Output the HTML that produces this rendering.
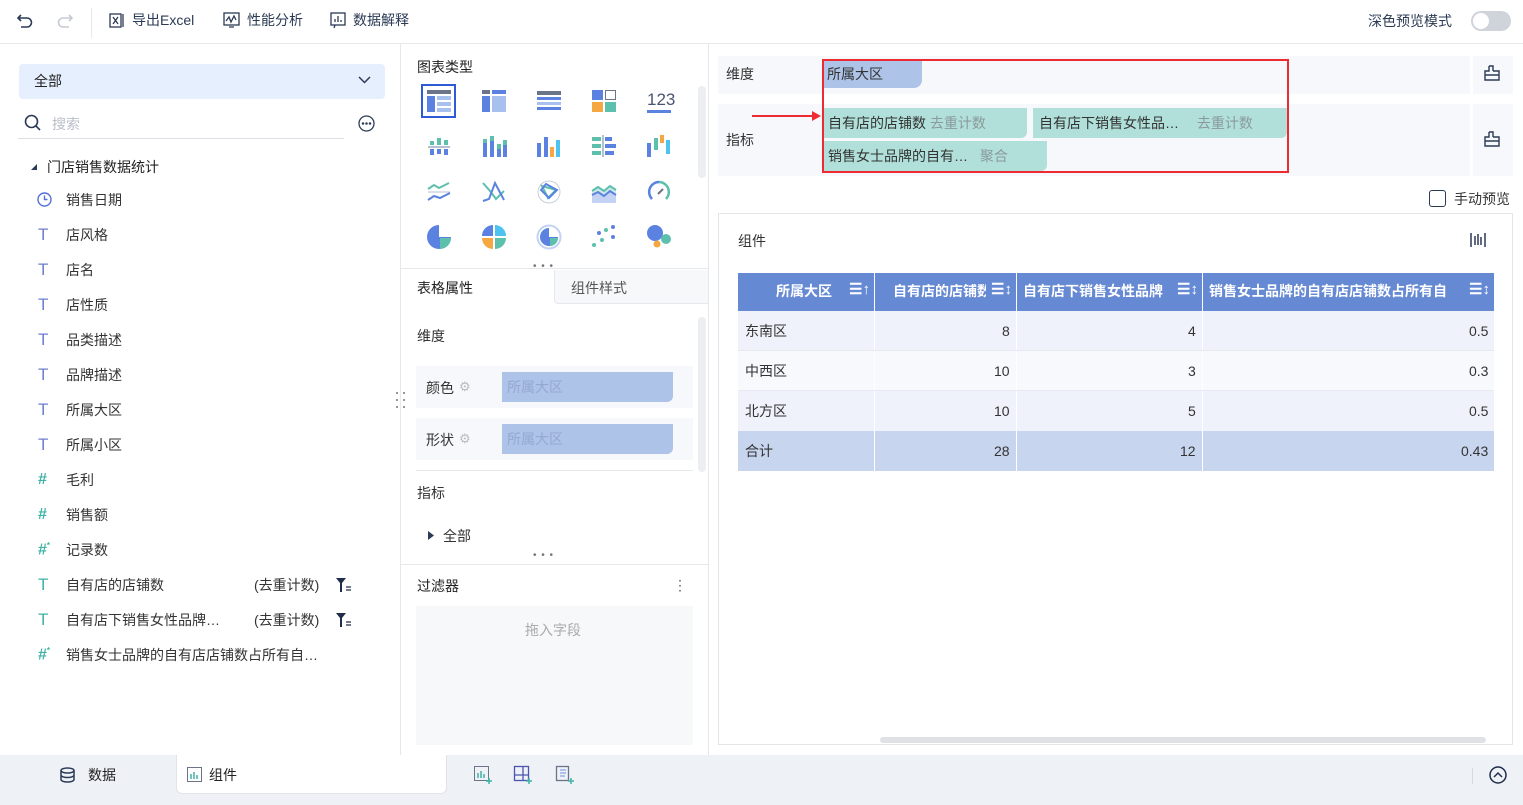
<!DOCTYPE html>
<html><head><meta charset="utf-8"><style>
*{box-sizing:border-box;margin:0;padding:0}
body{width:1523px;height:805px;overflow:hidden;background:#fff;font-family:"Liberation Sans","Noto Sans CJK SC",sans-serif;font-size:14px;color:#333;position:relative}
.a{position:absolute}
.t{position:absolute;white-space:nowrap;line-height:1}
svg{position:absolute;overflow:visible}
.d{position:absolute;width:2px;height:2px;background:#777;border-radius:1px}
</style></head><body>
<!-- top bar -->
<div class="a" style="left:0;top:43px;width:1523px;height:1px;background:#e6e8ec"></div>
<svg style="left:16px;top:12px" width="18" height="18" viewBox="0 0 18 18" fill="none" stroke="#2b3a55" stroke-width="1.6"><path d="M5 3L2 6l3 3M2 6h9a4.5 4.5 0 010 9H5"/></svg>
<svg style="left:56px;top:12px" width="18" height="18" viewBox="0 0 18 18" fill="none" stroke="#c5cad3" stroke-width="1.6"><path d="M13 3l3 3-3 3M16 6H7a4.5 4.5 0 000 9h6"/></svg>
<div class="a" style="left:91px;top:8px;width:1px;height:30px;background:#e6e8ec"></div>
<svg style="left:109px;top:13px" width="16" height="16" viewBox="0 0 16 16" fill="none" stroke="#2b3a55" stroke-width="1.3"><rect x="1" y="1" width="11" height="13"/><path d="M4 4l5 7M9 4l-5 7M14 1v13"/></svg>
<div class="t" style="left:132px;top:13px;font-size:14px;color:#2b3a55">导出Excel</div>
<svg style="left:223px;top:12px" width="17" height="16" viewBox="0 0 17 16" fill="none" stroke="#2b3a55" stroke-width="1.3"><rect x="1" y="1" width="15" height="12"/><path d="M3 9l3-4 2 5 3-6 2 4M6 15h5"/></svg>
<div class="t" style="left:247px;top:13px;color:#2b3a55">性能分析</div>
<svg style="left:330px;top:12px" width="16" height="17" viewBox="0 0 16 17" fill="none" stroke="#2b3a55" stroke-width="1.3"><rect x="1" y="1" width="14" height="12"/><path d="M5 10V7M8 10V4M11 10V8M5 13l-1 3"/></svg>
<div class="t" style="left:353px;top:13px;color:#2b3a55">数据解释</div>
<div class="t" style="left:1368px;top:14px;color:#2b3a55">深色预览模式</div>
<div class="a" style="left:1471px;top:11px;width:40px;height:20px;border-radius:10px;background:#cfd3da"></div>
<div class="a" style="left:1473px;top:13px;width:16px;height:16px;border-radius:8px;background:#fff"></div>

<!-- left panel -->
<div class="a" style="left:400px;top:44px;width:1px;height:711px;background:#e6e8ec"></div>
<div class="a" style="left:19px;top:64px;width:366px;height:35px;border-radius:4px;background:#e6effd"></div>
<div class="t" style="left:34px;top:74px;color:#222">全部</div>
<svg style="left:358px;top:76px" width="13" height="8" viewBox="0 0 13 8" fill="none" stroke="#2b3a55" stroke-width="1.5"><path d="M1 1l5.5 5.5L12 1"/></svg>
<svg style="left:24px;top:114px" width="18" height="18" viewBox="0 0 18 18" fill="none" stroke="#2b3a55" stroke-width="1.6"><circle cx="7.5" cy="7.5" r="6"/><path d="M12 12l4 4"/></svg>
<div class="t" style="left:52px;top:117px;color:#b9bec8">搜索</div>
<div class="a" style="left:18px;top:138px;width:326px;height:1px;background:#dcdfe4"></div>
<svg style="left:358px;top:115px" width="17" height="17" viewBox="0 0 17 17" fill="none" stroke="#2b3a55" stroke-width="1.3"><circle cx="8.5" cy="8.5" r="7.5"/><circle cx="5" cy="8.5" r=".6" fill="#2b3a55"/><circle cx="8.5" cy="8.5" r=".6" fill="#2b3a55"/><circle cx="12" cy="8.5" r=".6" fill="#2b3a55"/></svg>
<svg style="left:31px;top:164px" width="7" height="7" viewBox="0 0 7 7"><path d="M6 0v6H0z" fill="#2b3a55"/></svg>
<div class="t" style="left:47px;top:160px;color:#222">门店销售数据统计</div>

<svg style="left:37px;top:192px" width="15" height="15" viewBox="0 0 15 15" fill="none" stroke="#5570d8" stroke-width="1.4"><circle cx="7.5" cy="7.5" r="6.5"/><path d="M7.5 3.5v4h3"/></svg>
<div class="t" style="left:66px;top:193px">销售日期</div>
<div class="t" style="left:38px;top:226px;font-size:17px;color:#6f7fcf">T</div><div class="t" style="left:66px;top:228px">店风格</div>
<div class="t" style="left:38px;top:261px;font-size:17px;color:#6f7fcf">T</div><div class="t" style="left:66px;top:263px">店名</div>
<div class="t" style="left:38px;top:296px;font-size:17px;color:#6f7fcf">T</div><div class="t" style="left:66px;top:298px">店性质</div>
<div class="t" style="left:38px;top:331px;font-size:17px;color:#6f7fcf">T</div><div class="t" style="left:66px;top:333px">品类描述</div>
<div class="t" style="left:38px;top:366px;font-size:17px;color:#6f7fcf">T</div><div class="t" style="left:66px;top:368px">品牌描述</div>
<div class="t" style="left:38px;top:401px;font-size:17px;color:#6f7fcf">T</div><div class="t" style="left:66px;top:403px">所属大区</div>
<div class="t" style="left:38px;top:436px;font-size:17px;color:#6f7fcf">T</div><div class="t" style="left:66px;top:438px">所属小区</div>
<div class="t" style="left:38px;top:472px;font-size:16px;color:#3fb3a6;font-weight:bold">#</div><div class="t" style="left:66px;top:473px">毛利</div>
<div class="t" style="left:38px;top:507px;font-size:16px;color:#3fb3a6;font-weight:bold">#</div><div class="t" style="left:66px;top:508px">销售额</div>
<div class="t" style="left:38px;top:542px;font-size:16px;color:#3fb3a6;font-weight:bold">#<sup style="font-size:8px">*</sup></div><div class="t" style="left:66px;top:543px">记录数</div>
<div class="t" style="left:38px;top:576px;font-size:17px;color:#3fb3a6">T</div><div class="t" style="left:66px;top:578px">自有店的店铺数</div>
<div class="t" style="left:254px;top:578px">(去重计数)</div>
<svg style="left:336px;top:578px" width="16" height="14" viewBox="0 0 16 14"><path d="M0 0h10L6 5v9H4V5z" fill="#1f2d4a"/><path d="M10 9h5M10 12h5" stroke="#1f2d4a" stroke-width="1.3"/></svg>
<div class="t" style="left:38px;top:611px;font-size:17px;color:#3fb3a6">T</div><div class="t" style="left:66px;top:613px">自有店下销售女性品牌…</div>
<div class="t" style="left:254px;top:613px">(去重计数)</div>
<svg style="left:336px;top:613px" width="16" height="14" viewBox="0 0 16 14"><path d="M0 0h10L6 5v9H4V5z" fill="#1f2d4a"/><path d="M10 9h5M10 12h5" stroke="#1f2d4a" stroke-width="1.3"/></svg>
<div class="t" style="left:38px;top:647px;font-size:16px;color:#3fb3a6;font-weight:bold">#<sup style="font-size:8px">*</sup></div><div class="t" style="left:66px;top:648px">销售女士品牌的自有店店铺数占所有自…</div>
<div class="d" style="left:396px;top:392px"></div><div class="d" style="left:403px;top:392px"></div>
<div class="d" style="left:396px;top:399px"></div><div class="d" style="left:403px;top:399px"></div>
<div class="d" style="left:396px;top:406px"></div><div class="d" style="left:403px;top:406px"></div>

<!-- middle panel -->
<div class="a" style="left:708px;top:44px;width:1px;height:711px;background:#e6e8ec"></div>
<div class="t" style="left:417px;top:60px;color:#222">图表类型</div>
<div class="a" style="left:698px;top:86px;width:8px;height:92px;border-radius:4px;background:#eceef1"></div>
<div class="a" style="left:421px;top:84px;width:35px;height:34px;border:2px solid #2f5bd6"></div>
<svg style="left:427px;top:90px" width="24" height="22" viewBox="0 0 24 22"><rect width="24" height="4" fill="#6b7488"/><rect y="6" width="8" height="16" fill="#5b82e0"/><rect x="10" y="6" width="14" height="4" fill="#a8c0ee"/><rect x="10" y="12" width="14" height="4" fill="#a8c0ee"/><rect x="10" y="18" width="14" height="4" fill="#a8c0ee"/></svg>
<svg style="left:482px;top:90px" width="24" height="22" viewBox="0 0 24 22"><rect width="8" height="4" fill="#6b7488"/><rect x="10" width="14" height="4" fill="#5b82e0"/><rect y="6" width="8" height="16" fill="#5b82e0"/><rect x="10" y="6" width="14" height="16" fill="#a8c0ee"/></svg>
<svg style="left:537px;top:91px" width="24" height="20" viewBox="0 0 24 20"><rect width="24" height="4" fill="#6b7488"/><rect y="6" width="24" height="3" fill="#5b82e0"/><rect y="11" width="24" height="3" fill="#a8c0ee"/><rect y="16" width="24" height="3" fill="#5b82e0"/></svg>
<svg style="left:592px;top:90px" width="24" height="22" viewBox="0 0 24 22"><rect width="11" height="10" fill="#5b82e0"/><rect x="13.5" y="0.5" width="10" height="9" fill="#fff" stroke="#6b7488"/><rect y="12" width="11" height="10" fill="#f5a742"/><rect x="13" y="12" width="11" height="10" fill="#5cc0ad"/></svg>
<div class="t" style="left:647px;top:91px;font-size:17px;color:#4a5570">123</div>
<div class="a" style="left:647px;top:110px;width:24px;height:3px;background:#5b82e0"></div>
<svg style="left:428px;top:135px" width="22" height="22" viewBox="0 0 22 22"><rect x="2" y="6" width="4" height="4" fill="#5cc0ad"/><rect x="9" y="3" width="4" height="7" fill="#5cc0ad"/><rect x="16" y="5" width="4" height="5" fill="#5cc0ad"/><rect y="11" width="22" height="2" fill="#b7c0d0"/><rect x="2" y="14" width="4" height="6" fill="#5b82e0"/><rect x="9" y="14" width="4" height="5" fill="#5b82e0"/><rect x="16" y="14" width="4" height="6" fill="#5b82e0"/></svg>
<svg style="left:483px;top:135px" width="24" height="22" viewBox="0 0 24 22"><rect x="0" y="8" width="4" height="14" fill="#5b82e0"/><rect x="0" y="4" width="4" height="4" fill="#5cc0ad"/><rect x="7" y="6" width="4" height="16" fill="#5b82e0"/><rect x="7" y="1" width="4" height="5" fill="#5cc0ad"/><rect x="14" y="14" width="4" height="8" fill="#5b82e0"/><rect x="14" y="9" width="4" height="5" fill="#5cc0ad"/><rect x="20" y="10" width="4" height="12" fill="#5b82e0"/><rect x="20" y="5" width="4" height="5" fill="#5cc0ad"/></svg>
<svg style="left:537px;top:135px" width="24" height="22" viewBox="0 0 24 22"><rect x="0" y="8" width="4" height="14" fill="#5b82e0"/><rect x="7" y="2" width="4" height="20" fill="#5b82e0"/><rect x="13" y="12" width="4" height="10" fill="#f5a742"/><rect x="19" y="5" width="4" height="17" fill="#4ec3f0"/></svg>
<svg style="left:592px;top:135px" width="24" height="22" viewBox="0 0 24 22"><rect x="10" y="0" width="2" height="22" fill="#b7c0d0"/><rect x="0" y="2" width="9" height="4" fill="#5cc0ad"/><rect x="13" y="2" width="7" height="4" fill="#5b82e0"/><rect x="0" y="9" width="9" height="4" fill="#5cc0ad"/><rect x="13" y="9" width="11" height="4" fill="#5b82e0"/><rect x="0" y="16" width="9" height="4" fill="#5cc0ad"/><rect x="13" y="16" width="9" height="4" fill="#5b82e0"/></svg>
<svg style="left:647px;top:135px" width="24" height="22" viewBox="0 0 24 22"><rect x="0" y="8" width="4" height="14" fill="#5b82e0"/><rect x="7" y="3" width="4" height="12" fill="#5cc0ad"/><rect x="13" y="0" width="4" height="8" fill="#f5a742"/><rect x="19" y="5" width="4" height="14" fill="#4ec3f0"/></svg>
<svg style="left:427px;top:181px" width="24" height="22" viewBox="0 0 24 22" fill="none" stroke-width="2"><path d="M1 8l6-4 5 3 10-5" stroke="#5cc0ad"/><path d="M1 11h22" stroke="#b7c0d0" stroke-width="1"/><path d="M1 19l6-4 6 2 10-5" stroke="#5b82e0"/></svg>
<svg style="left:482px;top:181px" width="24" height="22" viewBox="0 0 24 22" fill="none" stroke-width="2"><path d="M1 2l7 8 6 8 8-8" stroke="#5cc0ad"/><path d="M1 20l6-2 6-16 9 17" stroke="#5b82e0"/></svg>
<svg style="left:536px;top:180px" width="26" height="24" viewBox="0 0 26 24" fill="none" stroke-width="2"><circle cx="13" cy="12" r="11" stroke="#c8cfdc" stroke-width="1"/><path d="M6 6l14 4-8 8z" stroke="#5cc0ad"/><path d="M5 10l5-6 11 6-8 8z" stroke="#5b82e0"/></svg>
<svg style="left:592px;top:181px" width="24" height="22" viewBox="0 0 24 22"><path d="M0 10l6-4 6 4 6-5 6 4v13H0z" fill="#cfe9e6"/><path d="M0 14l6-3 6 4 6-5 6 4v8H0z" fill="#c4d2f4"/><path d="M0 10l6-4 6 4 6-5 6 4" stroke="#5cc0ad" stroke-width="2" fill="none"/><path d="M0 14l6-3 6 4 6-5 6 4" stroke="#5b82e0" stroke-width="2" fill="none"/></svg>
<svg style="left:647px;top:180px" width="24" height="24" viewBox="0 0 24 24" fill="none" stroke-width="2.5"><path d="M5 19A10 10 0 0112 2" stroke="#5b82e0"/><path d="M12 2a10 10 0 017 17" stroke="#5cc0ad"/><path d="M11 14l5-5" stroke="#6b7488" stroke-width="2"/></svg>
<svg style="left:427px;top:225px" width="24" height="24" viewBox="0 0 24 24"><path d="M12 12V0A12 12 0 1024 12z" fill="#5b82e0"/><path d="M13 13h11A11 11 0 0113 24z" fill="#5cc0ad"/></svg>
<svg style="left:482px;top:225px" width="24" height="24" viewBox="0 0 24 24"><path d="M11 11V0A11 11 0 000 11z" fill="#5b82e0"/><path d="M13 11V0a11 11 0 0111 11z" fill="#4ec3f0"/><path d="M11 13H0a11 11 0 0011 11z" fill="#f5a742"/><path d="M13 13h11a11 11 0 01-11 11z" fill="#5cc0ad"/></svg>
<svg style="left:536px;top:224px" width="26" height="26" viewBox="0 0 26 26"><circle cx="13" cy="13" r="11.5" fill="none" stroke="#c4d2f4" stroke-width="2"/><path d="M13 13V4a9 9 0 100 18 9 9 0 009-9z" fill="#5b82e0"/><path d="M14 14h8a8 8 0 01-8 8z" fill="#5cc0ad"/></svg>
<svg style="left:592px;top:225px" width="24" height="24" viewBox="0 0 24 24"><circle cx="21" cy="2" r="2" fill="#5b82e0"/><circle cx="14" cy="5" r="2" fill="#5cc0ad"/><circle cx="7" cy="8" r="2" fill="#5b82e0"/><circle cx="21" cy="12" r="2" fill="#5b82e0"/><circle cx="10" cy="15" r="2" fill="#5cc0ad"/><circle cx="2" cy="20" r="2" fill="#5cc0ad"/></svg>
<svg style="left:646px;top:224px" width="26" height="26" viewBox="0 0 26 26"><circle cx="9" cy="9" r="8" fill="#5b82e0"/><circle cx="20" cy="15" r="5" fill="#5cc0ad"/><circle cx="11" cy="20" r="3.5" fill="#f5a742"/></svg>
<div class="t" style="left:533px;top:262px;color:#777;font-size:10px;letter-spacing:1px">• • •</div>
<div class="a" style="left:401px;top:268px;width:307px;height:1px;background:#e6e8ec"></div>
<div class="t" style="left:417px;top:281px;color:#222">表格属性</div>
<div class="a" style="left:554px;top:270px;width:154px;height:34px;background:#f7f8fa;border-left:1px solid #e6e8ec;border-bottom:1px solid #e6e8ec;border-bottom-left-radius:4px"></div>
<div class="t" style="left:571px;top:281px;color:#555">组件样式</div>
<div class="a" style="left:698px;top:317px;width:8px;height:155px;border-radius:4px;background:#eceef1"></div>
<div class="t" style="left:417px;top:329px;color:#333">维度</div>
<div class="a" style="left:416px;top:366px;width:277px;height:42px;background:#f7f8fb"></div>
<div class="t" style="left:426px;top:381px">颜色</div><div class="t" style="left:459px;top:380px;color:#bbb;font-size:13px">⚙</div>
<div class="a" style="left:502px;top:372px;width:171px;height:30px;background:#aec3e8;border-radius:0 0 6px 0"></div>
<div class="t" style="left:507px;top:380px;color:#94a9d2">所属大区</div>
<div class="a" style="left:416px;top:418px;width:277px;height:42px;background:#f7f8fb"></div>
<div class="t" style="left:426px;top:433px">形状</div><div class="t" style="left:459px;top:432px;color:#bbb;font-size:13px">⚙</div>
<div class="a" style="left:502px;top:424px;width:171px;height:30px;background:#aec3e8;border-radius:0 0 6px 0"></div>
<div class="t" style="left:507px;top:432px;color:#94a9d2">所属大区</div>
<div class="a" style="left:416px;top:470px;width:277px;height:1px;background:#e6e8ec"></div>
<div class="t" style="left:417px;top:486px">指标</div>
<svg style="left:428px;top:531px" width="6" height="9" viewBox="0 0 6 9"><path d="M0 0l6 4.5L0 9z" fill="#2b3a55"/></svg>
<div class="t" style="left:443px;top:529px">全部</div>
<div class="t" style="left:533px;top:551px;color:#777;font-size:10px;letter-spacing:1px">• • •</div>
<div class="a" style="left:401px;top:564px;width:307px;height:1px;background:#e6e8ec"></div>
<div class="t" style="left:417px;top:579px;color:#222">过滤器</div>
<div class="t" style="left:673px;top:578px;color:#555">⋮</div>
<div class="a" style="left:416px;top:606px;width:277px;height:139px;background:#f7f8fa"></div>
<div class="t" style="left:525px;top:623px;color:#aaa">拖入字段</div>

<!-- right panel -->
<div class="a" style="left:718px;top:56px;width:752px;height:38px;background:#f7f8fb"></div>
<div class="a" style="left:1473px;top:56px;width:40px;height:38px;background:#f7f8fb"></div>
<div class="t" style="left:726px;top:67px">维度</div>
<div class="a" style="left:718px;top:104px;width:752px;height:72px;background:#f7f8fb"></div>
<div class="a" style="left:1473px;top:104px;width:40px;height:72px;background:#f7f8fb"></div>
<div class="t" style="left:726px;top:133px">指标</div>
<svg style="left:1484px;top:65px" width="16" height="16" viewBox="0 0 16 16" fill="none" stroke="#2b3a55" stroke-width="1.4"><path d="M5 1h4v5M5 1v5H1v9h14V6H9M1 10h14"/></svg>
<svg style="left:1484px;top:131px" width="16" height="16" viewBox="0 0 16 16" fill="none" stroke="#2b3a55" stroke-width="1.4"><path d="M5 1h4v5M5 1v5H1v9h14V6H9M1 10h14"/></svg>
<div class="a" style="left:823px;top:60px;width:99px;height:28px;background:#aec3e8;border-radius:0 0 8px 0"></div>
<div class="t" style="left:827px;top:67px;color:#333">所属大区</div>
<div class="a" style="left:824px;top:108px;width:203px;height:30px;background:#b1e0da;border-radius:0 0 6px 0"></div>
<div class="t" style="left:828px;top:116px">自有店的店铺数 <span style="color:#8a9a9a">去重计数</span></div>
<div class="a" style="left:1033px;top:108px;width:254px;height:30px;background:#b1e0da;border-radius:0 0 6px 0"></div>
<div class="t" style="left:1039px;top:116px">自有店下销售女性品… <span style="color:#8a9a9a;margin-left:14px">去重计数</span></div>
<div class="a" style="left:824px;top:141px;width:223px;height:30px;background:#b1e0da;border-radius:0 0 6px 0"></div>
<div class="t" style="left:828px;top:149px">销售女士品牌的自有… <span style="color:#8a9a9a;margin-left:8px">聚合</span></div>
<div class="a" style="left:822px;top:59px;width:467px;height:114px;border:2px solid #ee2b32"></div>
<div class="a" style="left:752px;top:115px;width:62px;height:2px;background:#ee2b32"></div>
<svg style="left:812px;top:111px" width="9" height="10" viewBox="0 0 9 10"><path d="M0 0l9 5-9 5z" fill="#ee2b32"/></svg>
<div class="a" style="left:1429px;top:190px;width:17px;height:17px;border:1.5px solid #2b3a55;border-radius:3px"></div>
<div class="t" style="left:1454px;top:192px">手动预览</div>

<div class="a" style="left:718px;top:213px;width:795px;height:532px;border:1px solid #e3e5e9"></div>
<div class="t" style="left:738px;top:234px;color:#333">组件</div>
<svg style="left:1470px;top:232px" width="16" height="16" viewBox="0 0 16 16" stroke="#2b3a55" stroke-width="1.5"><path d="M1 1v14M15 1v14M5 4v9M8 2v11M11 5v8"/></svg>
<!-- table -->
<div class="a" style="left:738px;top:273px;width:756px;height:38px;background:#6689d3"></div>
<div class="a" style="left:874px;top:273px;width:1px;height:198px;background:#fff"></div>
<div class="a" style="left:1016px;top:273px;width:1px;height:198px;background:#fff"></div>
<div class="a" style="left:1202px;top:273px;width:1px;height:198px;background:#fff"></div>
<div class="t" style="left:776px;top:284px;color:#fff;font-weight:bold">所属大区</div>
<div class="t" style="left:893px;top:284px;color:#fff;font-weight:bold;width:93px;overflow:hidden">自有店的店铺数</div>
<div class="t" style="left:1023px;top:284px;color:#fff;font-weight:bold">自有店下销售女性品牌</div>
<div class="t" style="left:1209px;top:284px;color:#fff;font-weight:bold">销售女士品牌的自有店店铺数占所有自</div>
<div class="t" style="left:849px;top:282px;color:#fff;font-weight:bold;font-size:15px">☰↑</div>
<div class="t" style="left:991px;top:282px;color:#fff;font-weight:bold;font-size:15px">☰↕</div>
<div class="t" style="left:1177px;top:282px;color:#fff;font-weight:bold;font-size:15px">☰↕</div>
<div class="t" style="left:1469px;top:282px;color:#fff;font-weight:bold;font-size:15px">☰↕</div>
<div class="a" style="left:738px;top:311px;width:756px;height:40px;background:#eff2fa;z-index:-1"></div>
<div class="a" style="left:738px;top:351px;width:756px;height:40px;background:#f7f9fd;z-index:-1"></div>
<div class="a" style="left:738px;top:391px;width:756px;height:40px;background:#eff2fa;z-index:-1"></div>
<div class="a" style="left:738px;top:431px;width:756px;height:40px;background:#c7d5ef;z-index:-1"></div>
<div class="a" style="left:738px;top:350px;width:756px;height:1px;background:#e6e9f1"></div>
<div class="a" style="left:738px;top:390px;width:756px;height:1px;background:#e6e9f1"></div>
<div class="t" style="left:745px;top:324px">东南区</div><div class="t" style="left:1002px;top:324px">8</div><div class="t" style="left:1188px;top:324px">4</div><div class="t" style="left:1469px;top:324px">0.5</div>
<div class="t" style="left:745px;top:364px">中西区</div><div class="t" style="left:994px;top:364px">10</div><div class="t" style="left:1188px;top:364px">3</div><div class="t" style="left:1469px;top:364px">0.3</div>
<div class="t" style="left:745px;top:404px">北方区</div><div class="t" style="left:994px;top:404px">10</div><div class="t" style="left:1188px;top:404px">5</div><div class="t" style="left:1469px;top:404px">0.5</div>
<div class="t" style="left:745px;top:444px">合计</div><div class="t" style="left:994px;top:444px">28</div><div class="t" style="left:1180px;top:444px">12</div><div class="t" style="left:1461px;top:444px">0.43</div>
<div class="a" style="left:880px;top:737px;width:606px;height:6px;border-radius:3px;background:#dfe1e5"></div>

<!-- bottom bar -->
<div class="a" style="left:0;top:755px;width:1523px;height:50px;background:#eef1f6"></div>
<div class="a" style="left:176px;top:755px;width:271px;height:39px;background:#fff;border-radius:0 0 6px 6px;border:1px solid #e0e3e8;border-top:none"></div>
<svg style="left:60px;top:767px" width="15" height="16" viewBox="0 0 15 16" fill="none" stroke="#2b3a55" stroke-width="1.5"><ellipse cx="7.5" cy="3.5" rx="6.5" ry="2.5"/><path d="M1 3.5v9c0 1.4 2.9 2.5 6.5 2.5s6.5-1.1 6.5-2.5v-9M1 8c0 1.4 2.9 2.5 6.5 2.5S14 9.4 14 8"/></svg>
<div class="t" style="left:88px;top:768px;color:#222">数据</div>
<svg style="left:187px;top:767px" width="15" height="15" viewBox="0 0 15 15" fill="none"><rect x=".5" y=".5" width="14" height="14" stroke="#6b7488"/><path d="M4 12V7M7 12V5M10 12V8" stroke="#3fb3a6" stroke-width="1.5"/></svg>
<div class="t" style="left:209px;top:768px;color:#222">组件</div>
<svg style="left:474px;top:766px" width="19" height="18" viewBox="0 0 19 18" fill="none"><rect x=".5" y=".5" width="14" height="14" stroke="#6b7488"/><path d="M4 12V7M7 12V5M10 12V8" stroke="#3fb3a6" stroke-width="1.5"/><path d="M15 12v6M12 15h6" stroke="#3fb3a6" stroke-width="1.5"/></svg>
<svg style="left:514px;top:766px" width="19" height="18" viewBox="0 0 19 18" fill="none" stroke="#4a55b0" stroke-width="1.3"><rect x=".5" y=".5" width="14" height="14"/><path d="M9 1v13M1 9h13"/><path d="M15 12v6M12 15h6" stroke="#3fb3a6" stroke-width="1.5"/></svg>
<svg style="left:556px;top:766px" width="19" height="18" viewBox="0 0 19 18" fill="none" stroke="#6b7488" stroke-width="1.3"><rect x=".5" y=".5" width="12" height="14"/><path d="M4 4h6M4 7h6M4 10h5" stroke="#8aa4e0"/><path d="M15 12v6M12 15h6" stroke="#3fb3a6" stroke-width="1.5"/></svg>
<div class="a" style="left:1472px;top:768px;width:1px;height:16px;background:#d5d9e0"></div>
<svg style="left:1489px;top:766px" width="18" height="18" viewBox="0 0 18 18" fill="none" stroke="#1f2d4a" stroke-width="1.5"><circle cx="9" cy="9" r="8"/><path d="M5 11l4-4 4 4"/></svg>
</body></html>
